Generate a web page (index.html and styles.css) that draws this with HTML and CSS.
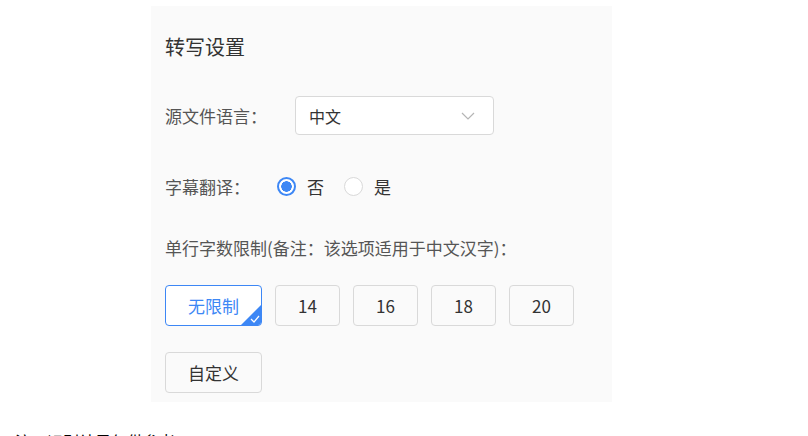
FILE: index.html
```html
<!DOCTYPE html>
<html lang="zh-CN">
<head>
  <meta charset="UTF-8" />
  <title>转写设置</title>
  <link rel="stylesheet" href="styles.css">
</head>
<body>
  <div class="panel">
    <div class="panel-title">转写设置</div>

    <div class="row row-lang">
      <span class="label label-lang">源文件语言：</span>
      <div class="select">
        <span class="select-value">中文</span>
        <svg class="select-arrow" width="14" height="8" viewBox="0 0 14 8">
          <path d="M1 1 L7 7 L13 1" fill="none" stroke="#b5b5b5" stroke-width="1.2" />
        </svg>
      </div>
    </div>

    <div class="row row-translate">
      <span class="label label-translate">字幕翻译：</span>
      <label class="radio checked"><span class="radio-dot"></span>否</label>
      <label class="radio"><span class="radio-dot"></span>是</label>
    </div>

    <div class="note">单行字数限制(备注：该选项适用于中文汉字)：</div>

    <div class="options">
      <button class="option active">无限制
        <span class="corner">
          <svg width="10" height="8" viewBox="0 0 10 8">
            <path d="M1 4 L4 7 L9 1" fill="none" stroke="#fff" stroke-width="1.2" />
          </svg>
        </span>
      </button>
      <button class="option small">14</button>
      <button class="option small">16</button>
      <button class="option small">18</button>
      <button class="option small">20</button>
    </div>

    <div class="options">
      <button class="option">自定义</button>
    </div>
  </div>

  <div class="below">注：识别结果仅供参考</div>
</body>
</html>
```

FILE: styles.css
```css
:root {
  --blue: #3d87f5;
  --border: #d9d9d9;
  --label: #555;
}

body {
  margin: 0;
  background: #fff;
  font-family: "Noto Sans CJK SC", "Noto Sans", sans-serif;
  color: #333;
  height: 436px;
  overflow: hidden;
}

.panel {
  width: 461px;
  height: 396px;
  box-sizing: border-box;
  margin: 6px 0 0 151px;
  padding: 29px 14px 0 14px;
  background: #fafafa;
}

.panel-title {
  font-size: 20px;
  line-height: 24px;
  color: #333;
}

.row {
  display: flex;
  align-items: center;
}

.row-lang {
  margin-top: 37px;
}

.label {
  font-size: 17px;
  color: var(--label);
}

.label-lang {
  width: 130px;
}

.label-translate {
  width: 112px;
}

.select {
  width: 199px;
  height: 39px;
  box-sizing: border-box;
  border: 1px solid var(--border);
  border-radius: 4px;
  background: #fff;
  display: flex;
  align-items: center;
  justify-content: space-between;
  padding: 0 18px 0 13px;
}

.select-value {
  font-size: 16px;
  color: #333;
}

.row-translate {
  margin-top: 41px;
  height: 20px;
}

.radio {
  display: flex;
  align-items: center;
  font-size: 17px;
  color: #333;
  margin-right: 20px;
}

.radio-dot {
  width: 19px;
  height: 19px;
  box-sizing: border-box;
  border: 1px solid var(--border);
  border-radius: 50%;
  background: #fff;
  margin-right: 11px;
}

.radio.checked .radio-dot {
  border: 2px solid var(--blue);
  background: radial-gradient(circle, var(--blue) 0 5px, #fff 5.5px);
}

.note {
  margin-top: 42px;
  font-size: 17px;
  line-height: 20px;
  color: var(--label);
}

.options {
  display: flex;
  gap: 13px;
  margin-top: 27px;
}

.options + .options {
  margin-top: 26px;
}

.option {
  position: relative;
  width: 97px;
  height: 41px;
  box-sizing: border-box;
  border: 1px solid var(--border);
  border-radius: 4px;
  background: #fafafa;
  font-family: inherit;
  font-size: 17px;
  color: #333;
  padding: 0;
  overflow: hidden;
}

.option.small {
  width: 65px;
}

.option.active {
  border-color: var(--blue);
  color: var(--blue);
  background: #fff;
}

.corner {
  position: absolute;
  right: 0;
  bottom: 0;
  width: 0;
  height: 0;
  border-style: solid;
  border-width: 0 0 20px 20px;
  border-color: transparent transparent var(--blue) transparent;
}

.corner svg {
  position: absolute;
  right: 1px;
  top: 10px;
}

.below {
  margin: 27px 0 0 15px;
  font-size: 16px;
  color: #000;
}
```
